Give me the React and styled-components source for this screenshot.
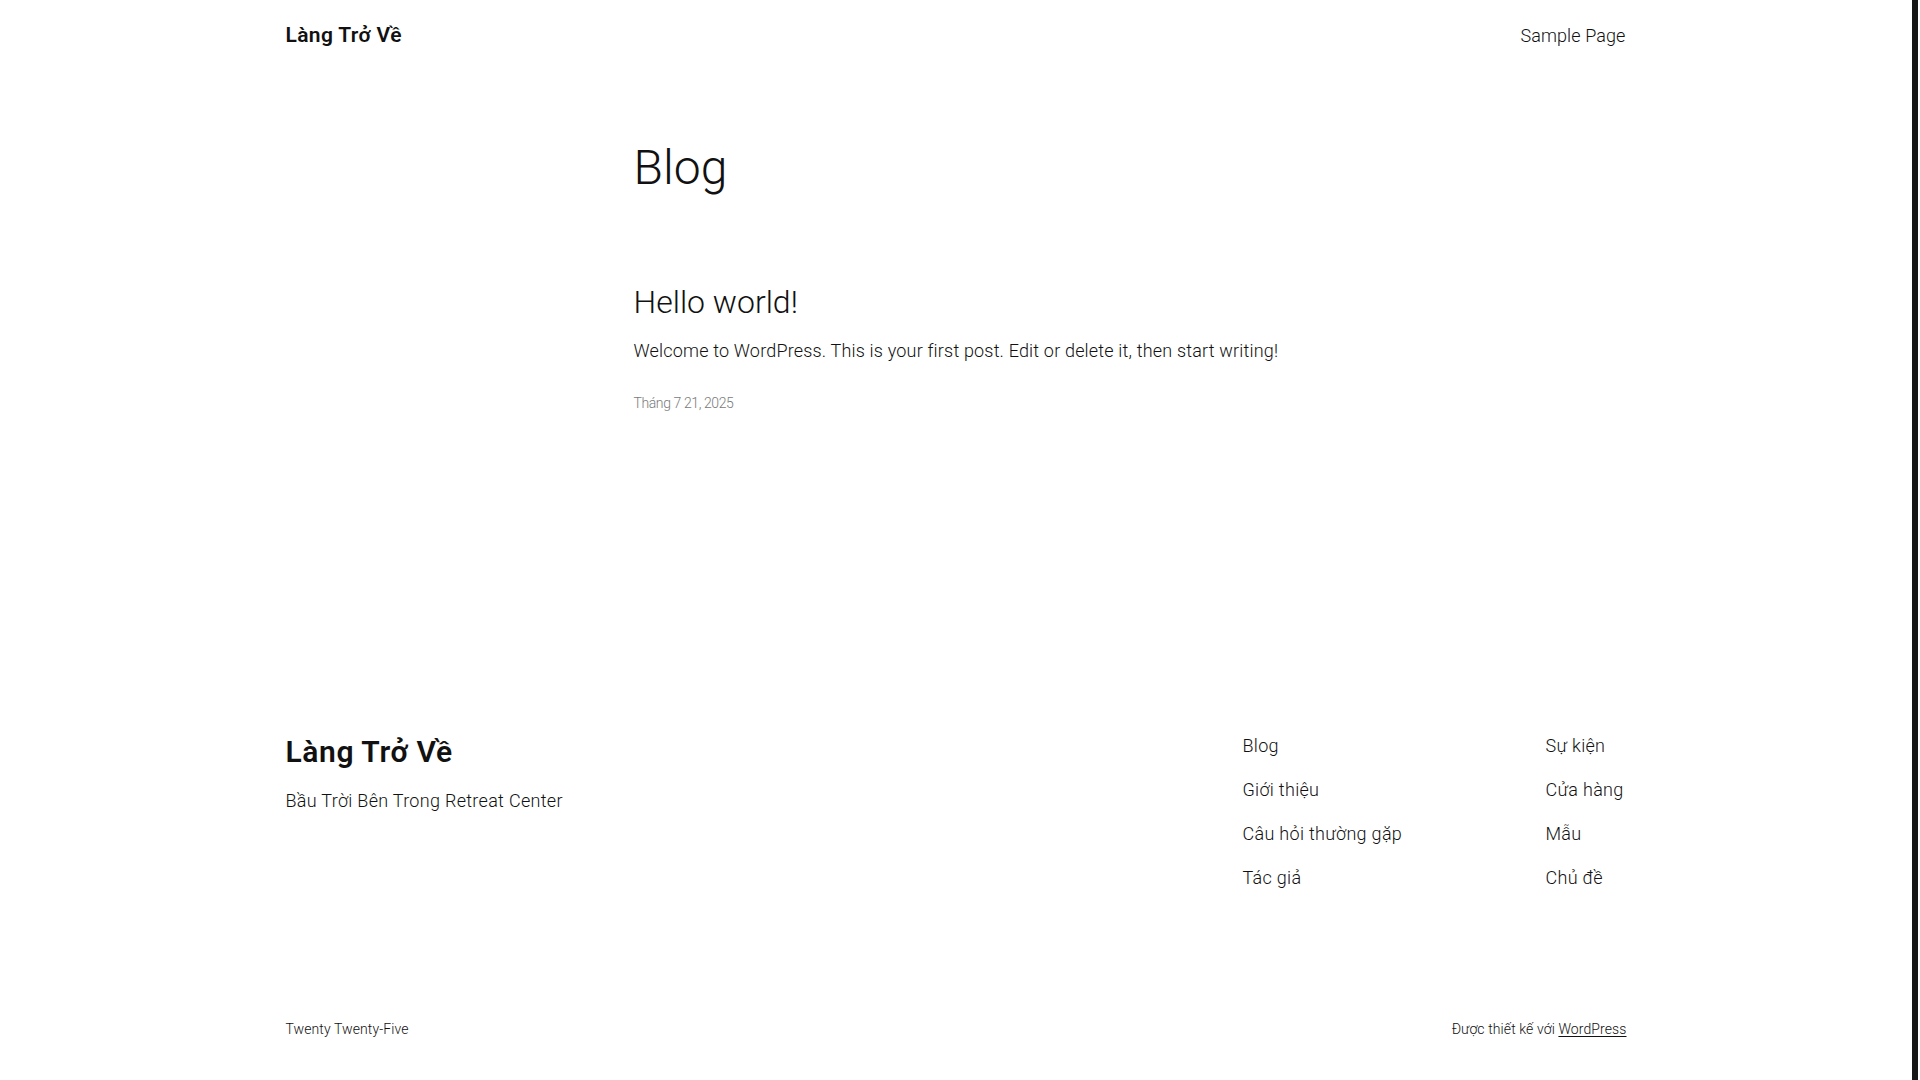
import styled, { createGlobalStyle } from "styled-components"

const GlobalStyle = createGlobalStyle`
  html, body {
    margin: 0;
    padding: 0;
    background: #ffffff;
  }
  body {
    font-family: Roboto, "Noto Sans", "Liberation Sans", sans-serif;
    color: #111111;
    -webkit-font-smoothing: antialiased;
  }
  * {
    box-sizing: border-box;
  }
  a {
    color: inherit;
    text-decoration: none;
  }
`

const footerLinks = [
    ["Blog", "Giới thiệu", "Câu hỏi thường gặp", "Tác giả"],
    ["Sự kiện", "Cửa hàng", "Mẫu", "Chủ đề"],
]

export default function App() {
    return (
        <Page>
            <GlobalStyle />
            <Header>
                <Wide>
                    <SiteTitle href="#">Làng Trở Về</SiteTitle>
                    <NavLink href="#">Sample Page</NavLink>
                </Wide>
            </Header>

            <Main>
                <PageTitle>Blog</PageTitle>
                <Post>
                    <PostTitle>Hello world!</PostTitle>
                    <Excerpt>Welcome to WordPress. This is your first post. Edit or delete it, then start writing!</Excerpt>
                    <PostDate>Tháng 7 21, 2025</PostDate>
                </Post>
            </Main>

            <Footer>
                <Wide>
                    <Brand>
                        <FooterTitle href="#">Làng Trở Về</FooterTitle>
                        <Tagline>Bầu Trời Bên Trong Retreat Center</Tagline>
                    </Brand>
                    <FooterNavs>
                        {footerLinks.map((col, i) => (
                            <FooterColumn key={i}>
                                {col.map((label) => (
                                    <FooterLink key={label} href="#">{label}</FooterLink>
                                ))}
                            </FooterColumn>
                        ))}
                    </FooterNavs>
                </Wide>
                <Credits>
                    <Wide>
                        <Small>Twenty Twenty-Five</Small>
                        <Small>Được thiết kế với <a href="#">WordPress</a></Small>
                    </Wide>
                </Credits>
            </Footer>
        </Page>
    )
}

const Page = styled.div`
    min-height: 100vh;
    margin-right: 2px;
    border-right: 6px solid #161616;
    display: flex;
    flex-direction: column;
`

const Wide = styled.div`
    width: 1341px;
    margin: 0 auto;
    display: flex;
    justify-content: space-between;
    align-items: flex-start;
`

const Header = styled.header`
    height: 72px;
    display: flex;
    align-items: center;

    ${Wide} {
        align-items: center;
    }
`

const SiteTitle = styled.a`
    font-size: 21px;
    font-weight: 600;
    letter-spacing: 0.35px;
    line-height: 1.3;
`

const NavLink = styled.a`
    font-size: 18px;
    font-weight: 300;
    letter-spacing: 0.1px;
    line-height: 1.5;
    margin-right: 1px;
`

const Main = styled.main`
    width: 645px;
    margin: 0 auto;
    padding-top: 67px;
    padding-bottom: 320px;
`

const PageTitle = styled.h1`
    margin: 0;
    font-size: 48px;
    font-weight: 300;
    line-height: 1.2;
    letter-spacing: 0;
`

const Post = styled.article`
    margin-top: 86px;
`

const PostTitle = styled.h2`
    margin: 0;
    font-size: 32px;
    font-weight: 300;
    line-height: 1.2;
    letter-spacing: 0;
`

const Excerpt = styled.p`
    margin: 16px 0 0;
    font-size: 18px;
    font-weight: 300;
    line-height: 1.5;
    letter-spacing: 0.18px;
`

const PostDate = styled.p`
    margin: 28px 0 0;
    font-size: 14px;
    font-weight: 300;
    line-height: 1.6;
    letter-spacing: -0.4px;
    color: #7a7a7a;
`

const Footer = styled.footer`
    display: flex;
    flex-direction: column;
`

const Brand = styled.div`
    display: flex;
    flex-direction: column;
    gap: 17px;
`

const FooterTitle = styled.a`
    font-size: 30px;
    font-weight: 600;
    line-height: 1.2;
    letter-spacing: 0.6px;
`

const Tagline = styled.p`
    margin: 0;
    font-size: 18px;
    font-weight: 300;
    line-height: 1.5;
    letter-spacing: 0.3px;
`

const FooterNavs = styled.nav`
    display: grid;
    grid-template-columns: 303px 81px;
    margin-top: -2px;
`

const FooterColumn = styled.div`
    display: flex;
    flex-direction: column;
    gap: 17px;
`

const FooterLink = styled.a`
    font-size: 18px;
    font-weight: 300;
    line-height: 1.5;
    letter-spacing: 0.3px;
    white-space: nowrap;
`

const Credits = styled.div`
    margin-top: 128px;
    padding-bottom: 40px;

    ${Wide} {
        align-items: center;
    }
`

const Small = styled.p`
    margin: 0;
    font-size: 14px;
    font-weight: 300;
    line-height: 1.5;
    letter-spacing: 0.1px;

    a {
        text-decoration: underline;
        text-underline-offset: 2px;
    }
`
